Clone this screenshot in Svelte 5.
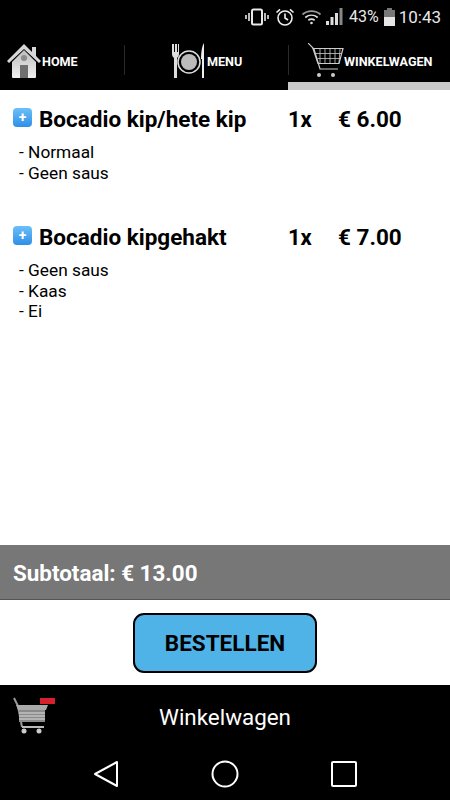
<script lang="ts">
	const orders = [
		{ name: "Bocadio kip/hete kip", qty: "1x", price: "€ 6.00", options: ["Normaal", "Geen saus"] },
		{ name: "Bocadio kipgehakt", qty: "1x", price: "€ 7.00", options: ["Geen saus", "Kaas", "Ei"] },
	];
</script>

<div class="phone">
	<header class="status">
		<svg class="st-vibrate" width="24" height="18" viewBox="0 0 24 18" fill="none" stroke="#e8e8e8">
			<rect x="7" y="1.5" width="10" height="15" rx="1.5" stroke-width="2" />
			<path d="M4 5v8M1 7v4M20 5v8M23 7v4" stroke-width="1.6" />
		</svg>
		<svg class="st-alarm" width="20" height="20" viewBox="0 0 20 20" fill="none" stroke="#eee" stroke-width="1.6">
			<circle cx="10" cy="11" r="7" />
			<path d="M10 6.5V11l3 2M1.5 5.5 5 2.3M18.5 5.5 15 2.3" />
		</svg>
		<svg class="st-wifi" width="21" height="16" viewBox="0 0 20 16" fill="none" stroke="#ddd" stroke-width="1.7">
			<path d="M1 5.500C6 1 14 1 19 5.500" stroke="#999" />
			<path d="M3.800 8.500C7.500 5.500 12.500 5.500 16.200 8.500" />
			<path d="M6.800 11.200C8.800 9.800 11.200 9.800 13.200 11.200" />
			<circle cx="10" cy="14" r="1.300" fill="#ddd" stroke="none" />
		</svg>
		<svg class="st-signal" width="18" height="18" viewBox="0 0 18 18" fill="#ddd">
			<rect x="0" y="13" width="3" height="4" />
			<rect x="4.500" y="9" width="3" height="8" />
			<rect x="9" y="5" width="3" height="12" />
			<rect x="13.500" y="0" width="3" height="17" fill="#888" />
		</svg>
		<span class="st-pct">43%</span>
		<svg class="st-battery" width="11" height="18" viewBox="0 0 11 18">
			<path d="M3 0h5v2h3v16H0V2h3z" fill="#777" />
			<rect x="0" y="9" width="11" height="9" fill="#e6e6e6" />
		</svg>
		<span class="st-time">10:43</span>
	</header>

	<nav class="tabs">
		<div class="tab tab-home">
			<svg width="34" height="36" viewBox="0 0 34 36">
				<defs>
					<linearGradient id="wall" x1="0" y1="0" x2="0" y2="1">
						<stop offset="0" stop-color="#bdbdbd" />
						<stop offset="1" stop-color="#f0f0f0" />
					</linearGradient>
				</defs>
				<path d="M0 18 17 1l8 8V4h4v9l5 5-2 2L17 6 2 20z" fill="#d8d8d8" />
				<path d="M5 19 17 7l12 12v15a1 1 0 0 1-1 1H6a1 1 0 0 1-1-1z" fill="url(#wall)" />
				<circle cx="17" cy="15" r="3" fill="#8c8c8c" />
				<rect x="13" y="22" width="8" height="13" fill="#6f6f6f" />
			</svg>
			<span class="tab-label">HOME</span>
		</div>
		<div class="tab tab-menu">
			<svg width="36" height="36" viewBox="0 0 36 36">
				<path d="M1 1v10c0 2 1 3 2 4v20h3V15c1-1 2-2 2-4V1H7v8H6V1H4v8H3V1z" fill="#ddd" />
				<circle cx="18" cy="19" r="11" fill="none" stroke="#ddd" stroke-width="1.5" />
				<circle cx="18" cy="19" r="8" fill="#bbb" />
				<path d="M33 0c-2 3-3 9-3 16h1v19h2z" fill="#eee" />
			</svg>
			<span class="tab-label">MENU</span>
		</div>
		<div class="tab tab-cart">
			<svg width="36" height="36" viewBox="0 0 36 36" fill="none" stroke="#ccc">
				<path d="M0 0 6 6l6 20h18" stroke-width="1.2" />
				<path d="M5 5.500h30l-4 15H10z" stroke-width="1.2" />
				<path d="M8 10.500h26M9.500 15.500h23M12 6v14M17 6v14M22 6v14M27 6v14M32 6l-1 14" stroke-width="0.8" />
				<circle cx="11" cy="32" r="2" fill="#ccc" stroke="none" />
				<circle cx="25" cy="32" r="2" fill="#ccc" stroke="none" />
			</svg>
			<span class="tab-label">WINKELWAGEN</span>
		</div>
	</nav>

	<main class="orders">
		{#each orders as order}
			<section class="order">
				<div class="order-head">
					<span class="plus">+</span>
					<h2>{order.name}</h2>
					<span class="qty">{order.qty}</span>
					<span class="price">{order.price}</span>
				</div>
				<ul>
					{#each order.options as option}
						<li>- {option}</li>
					{/each}
				</ul>
			</section>
		{/each}
	</main>

	<div class="subtotal">Subtotaal: € 13.00</div>

	<div class="action">
		<button type="button">BESTELLEN</button>
	</div>

	<div class="title-bar">
		<svg class="ic-cart-red" width="44" height="42" viewBox="0 0 44 42">
			<path d="M2 1l4 8 4 21" fill="none" stroke="#999" stroke-width="2" />
			<path d="M4 8h32l-2 5H6z" fill="#aaa" />
			<rect x="7" y="13" width="26" height="12" fill="#8a8a8a" />
			<path d="M7 16h26M7 19h26M7 22h26" stroke="#ddd" stroke-width="1.2" />
			<path d="M10 30h22" stroke="#bbb" stroke-width="2" />
			<circle cx="12" cy="34" r="2.500" fill="#ccc" />
			<circle cx="27" cy="34" r="2.500" fill="#ccc" />
			<rect x="28" y="1" width="15" height="6" fill="#d8202c" />
		</svg>
		<span>Winkelwagen</span>
	</div>

	<footer class="softkeys">
		<svg width="26" height="28" viewBox="0 0 26 28" fill="none" stroke="#fff" stroke-width="2">
			<path d="M24 2v24L2 14z" stroke-linejoin="round" />
		</svg>
		<svg width="28" height="28" viewBox="0 0 28 28" fill="none" stroke="#fff" stroke-width="2">
			<circle cx="14" cy="14" r="12.500" />
		</svg>
		<svg width="28" height="28" viewBox="0 0 28 28" fill="none" stroke="#fff" stroke-width="2">
			<rect x="2" y="2" width="24" height="24" rx="1" />
		</svg>
	</footer>
</div>

<style>
	:global(body) {
		margin: 0;
		background: #fff;
	}

	.phone {
		width: 450px;
		height: 800px;
		display: flex;
		flex-direction: column;
		font-family: Roboto, "Liberation Sans", sans-serif;
		overflow: hidden;
	}

	.status {
		height: 33px;
		background: #000;
		color: #e8e8e8;
		display: flex;
		align-items: center;
		justify-content: flex-end;
		padding-right: 9px;
		box-sizing: border-box;
	}

	.st-vibrate { margin-right: 6px; }
	.st-alarm { margin-right: 6px; }
	.st-wifi { margin-right: 4px; }
	.st-signal { margin-right: 5px; }

	.st-pct {
		font-size: 16px;
		margin-right: 5px;
	}

	.st-battery { margin-right: 4px; }

	.st-time { font-size: 17px; }

	.tabs {
		height: 57px;
		background: #000;
		display: grid;
		grid-template-columns: 124px 164px 162px;
	}

	.tab {
		position: relative;
		display: flex;
		align-items: center;
		padding-bottom: 1px;
		box-sizing: border-box;
	}

	.tab-home { padding-left: 7px; }
	.tab-menu { padding-left: 47px; }
	.tab-cart { padding-left: 20px; }

	.tab-home .tab-label { margin-left: 1px; }

	.tab + .tab::before {
		content: "";
		position: absolute;
		left: 0;
		top: 12px;
		height: 30px;
		width: 1px;
		background: #2a2a2a;
	}

	.tab-cart::after {
		content: "";
		position: absolute;
		left: 0;
		right: 0;
		bottom: 0;
		height: 8px;
		background: #c9c9c9;
	}

	.tab-label {
		color: #fff;
		font-size: 12.6px;
		font-weight: 700;
	}

	.orders {
		flex: 1;
		padding: 16px 0 0 13px;
		color: #000;
	}

	.order {
		height: 118px;
	}

	.order-head {
		display: flex;
		align-items: center;
		height: 26px;
	}

	.plus {
		width: 19px;
		height: 19px;
		border-radius: 4px;
		background: linear-gradient(#6cc0f8, #2f8fe8);
		color: #fff;
		font-size: 14px;
		font-weight: 700;
		line-height: 18px;
		text-align: center;
		margin-top: -3px;
		margin-right: 7px;
	}

	h2 {
		margin: 0;
		width: 249px;
		font-size: 22.5px;
		font-weight: 700;
		white-space: nowrap;
	}

	.qty {
		width: 50px;
		font-size: 22px;
		font-weight: 700;
	}

	.price {
		font-size: 22.5px;
		font-weight: 700;
	}

	ul {
		list-style: none;
		margin: 10px 0 0 6px;
		padding: 0;
		font-size: 17.3px;
		line-height: 20.5px;
	}

	.subtotal {
		height: 55px;
		background: #777;
		border-bottom: 1px solid #555;
		box-sizing: border-box;
		color: #fff;
		font-size: 22.4px;
		font-weight: 700;
		line-height: 57px;
		padding-left: 13px;
	}

	.action {
		height: 85px;
		display: flex;
		justify-content: center;
		align-items: center;
		padding-top: 1px;
		box-sizing: border-box;
	}

	button {
		width: 184px;
		height: 60px;
		border: 2px solid #000;
		border-radius: 11px;
		background: #4fb3e8;
		color: #000;
		font-family: inherit;
		font-size: 22.5px;
		font-weight: 700;
		padding: 0;
	}

	.title-bar {
		height: 66px;
		background: #000;
		position: relative;
		display: flex;
		align-items: center;
		justify-content: center;
		padding-bottom: 2px;
		box-sizing: border-box;
		color: #fff;
		font-size: 22.4px;
	}

	.ic-cart-red {
		position: absolute;
		left: 12px;
		top: 12px;
	}

	.softkeys {
		height: 49px;
		background: #000;
		display: flex;
		justify-content: space-between;
		align-items: flex-start;
		padding: 9px 92px 0 93px;
		box-sizing: border-box;
	}
</style>
